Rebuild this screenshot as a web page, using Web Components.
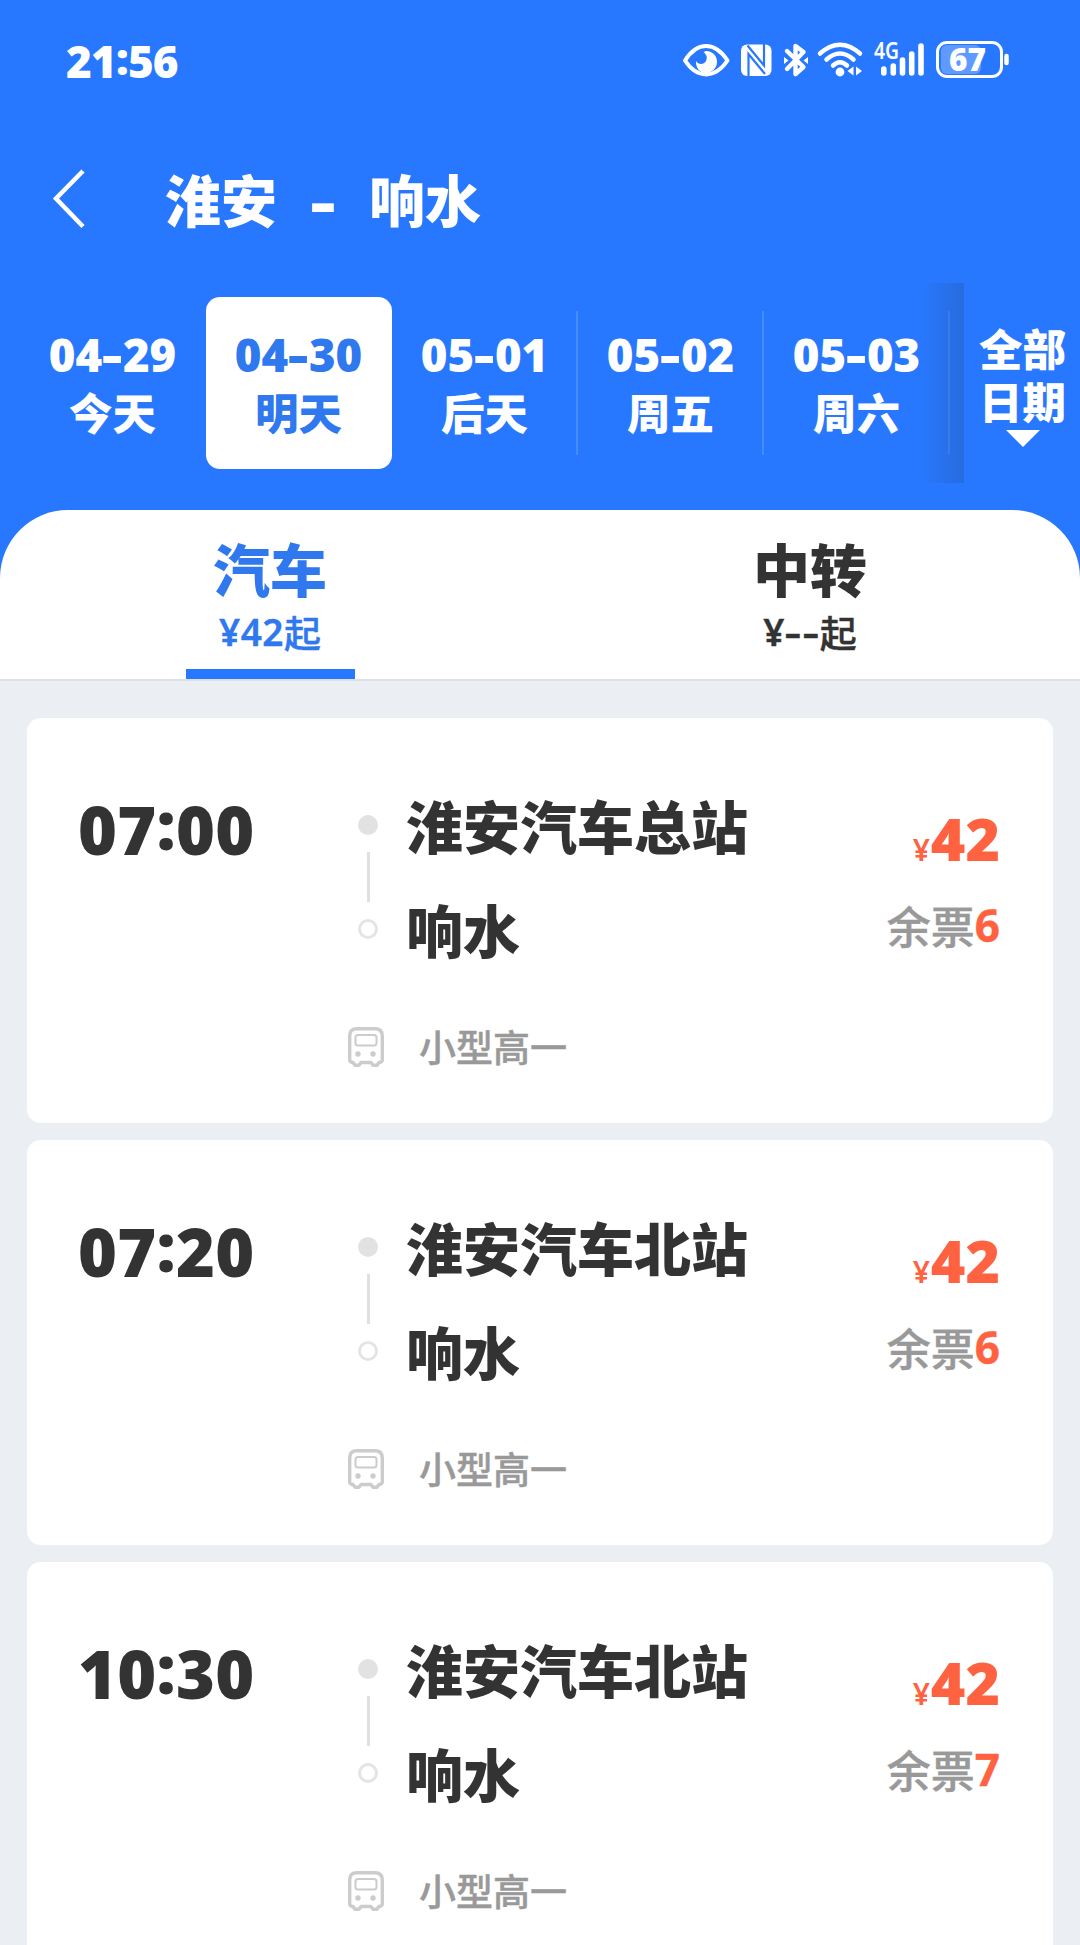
<!DOCTYPE html>
<html lang="zh-CN">
<head>
<meta charset="utf-8">
<title>淮安 - 响水</title>
<style>
  body {
    margin: 0;
    width: 1080px;
    height: 1945px;
    overflow: hidden;
    background: #ebeff4;
    color: #333;
    --num: "Noto Sans", sans-serif;
    font-family: "Noto Sans CJK SC", sans-serif;
    font-weight: 900;
  }
  header {
    height: 510px;
    background: #2878ff;
    color: #fff;
  }
</style>
</head>
<body>
<header>
  <status-bar time="21:56" battery="67"></status-bar>
  <nav-bar><span slot="from">淮安</span><span slot="to">响水</span></nav-bar>
  <date-strip>
    <date-item date="04-29">今天</date-item>
    <date-item date="04-30" active>明天</date-item>
    <date-item date="05-01" line>后天</date-item>
    <date-item date="05-02" line>周五</date-item>
    <date-item date="05-03" line>周六</date-item>
  </date-strip>
</header>
<trip-tabs>
  <trip-tab active price="42">汽车</trip-tab>
  <trip-tab price="--">中转</trip-tab>
</trip-tabs>
<trip-list></trip-list>

<script>
// wraps ":" and "-" so they can be raised or widened next to the digits
const marks = (text) => String(text)
  .replace(/-/g, '<i class="dash">-</i>')
  .replace(/:/g, '<i class="colon">:</i>');

const markStyles = `
  i { font-style: normal; }
  .colon { vertical-align: .07em; line-height: 0; }
  .dash { display: inline-block; transform: scaleX(1.4); margin: 0 .07em; }
`;

class StatusBar extends HTMLElement {
  constructor() {
    super();
    this.attachShadow({ mode: 'open' });
  }

  connectedCallback() {
    this.shadowRoot.innerHTML = `
      <style>
        ${markStyles}
        :host {
          display: flex;
          justify-content: space-between;
          box-sizing: border-box;
          height: 120px;
          padding: 31px 70px 0 66px;
        }
        .time {
          font: 900 44px/60px var(--num);
          letter-spacing: -.8px;
        }
        svg { display: block; margin-top: -1px; }
        text { font-family: var(--num); font-weight: 900; }
        .net { font-weight: 600; }
      </style>
      <div class="time">${marks(this.getAttribute('time'))}</div>
      <svg width="330" height="60" viewBox="680 30 330 60" fill="none" stroke="#fff" stroke-linecap="round" stroke-linejoin="round">
        <path d="M685 60.500C697 41 715 41 727.500 60.500C715 79 697 79 685 60.500Z" stroke-width="4"/>
        <path d="M706 51C712 51 717 55 717 62C717 68 712 73 706 73C700 73 695.500 68 696 61C698 65 704 65 706 61C708 57 706 54 703.500 52Z" fill="#fff" stroke="none"/>
        <rect x="741" y="44.500" width="30.500" height="31.500" rx="6" fill="#fff" stroke="none"/>
        <path d="M748.500 76V54L765 74M764 44V65.500L747.500 45.500" stroke="#2878ff" stroke-width="2.200" stroke-linecap="butt" stroke-linejoin="miter"/>
        <path d="M787 51L803.500 67L795.500 74V46L803.500 52L787 69" stroke-width="4.400"/>
        <path d="M784 57V64L788.500 60.500ZM808 57V64L803.500 60.500Z" fill="#fff" stroke="none"/>
        <path d="M820 53.500Q840 36 860 53.500M826.500 59.500Q840 47.500 853.500 59.500M833 65.500Q840 59 847 65.500" stroke-width="4.500"/>
        <circle cx="840" cy="72" r="4.400" fill="#fff" stroke="none"/>
        <path d="M853.500 66.500V75.500L847.500 71ZM856 66.500V75.500L862 71Z" fill="#fff" stroke="none"/>
        <text class="net" x="874" y="59" font-size="22.500" textLength="25" lengthAdjust="spacingAndGlyphs" fill="#fff" stroke="none">4G</text>
        <path d="M883.800 69V73M893.300 66V73M902.500 60V73M911.700 54V73M921 46V73" stroke-width="5.600"/>
        <rect x="941" y="45" width="40" height="29" rx="6" fill="#fff" fill-opacity=".25" stroke="none"/>
        <rect x="937.500" y="42.500" width="64" height="34" rx="9.500" stroke-width="3"/>
        <path d="M1006.500 56V63" stroke-width="4.500"/>
        <text x="949" y="70.500" font-size="31" textLength="37" lengthAdjust="spacingAndGlyphs" fill="#fff" stroke="none">${this.getAttribute('battery')}</text>
      </svg>
    `;
  }
}

class NavBar extends HTMLElement {
  constructor() {
    super();
    this.attachShadow({ mode: 'open' }).innerHTML = `
      <style>
        :host {
          display: flex;
          align-items: center;
          box-sizing: border-box;
          height: 157px;
          padding-left: 50px;
          font-size: 56px;
          line-height: 80px;
        }
        svg { width: 38px; height: 64px; margin-right: 77px; }
        .title { display: flex; align-items: center; padding-bottom: 2px; }
        .dash {
          width: 22px;
          margin: 6px 35px 0;
          font: 900 56px/80px var(--num);
          text-align: center;
          transform: scaleX(1.4);
        }
      </style>
      <svg viewBox="0 0 38 64" fill="none" stroke="#fff" stroke-width="4.500">
        <path d="M33 4L6 31.500L33 59.500"/>
      </svg>
      <div class="title">
        <slot name="from"></slot>
        <span class="dash">-</span>
        <slot name="to"></slot>
      </div>
    `;
  }
}

class DateItem extends HTMLElement {
  constructor() {
    super();
    this.attachShadow({ mode: 'open' });
  }

  connectedCallback() {
    this.shadowRoot.innerHTML = `
      <style>
        ${markStyles}
        :host {
          display: block;
          box-sizing: border-box;
          width: 186px;
          height: 172px;
          padding-top: 28px;
          text-align: center;
        }
        :host([active]) {
          background: #fff;
          color: #2f78ee;
          border-radius: 14px;
        }
        :host([line]) {
          background: linear-gradient(rgba(255, 255, 255, .14), rgba(255, 255, 255, .14)) right 14px / 2px 144px no-repeat;
        }
        .date {
          font: 900 45.500px/58px var(--num);
          margin-left: -1px;
        }
        .day {
          font-size: 43.500px;
          line-height: 58px;
          margin-left: -1px;
        }
      </style>
      <div class="date">${marks(this.getAttribute('date'))}</div>
      <div class="day"><slot></slot></div>
    `;
  }
}

class DateStrip extends HTMLElement {
  constructor() {
    super();
    this.attachShadow({ mode: 'open' }).innerHTML = `
      <style>
        :host { display: flex; height: 200px; padding-top: 6px; }
        .days {
          position: relative;
          display: flex;
          align-items: center;
          box-sizing: border-box;
          width: 964px;
          padding-left: 20px;
        }
        .days::after {
          content: "";
          position: absolute;
          top: 0;
          right: 0;
          width: 44px;
          height: 200px;
          background: linear-gradient(90deg, rgba(38, 96, 190, 0), rgba(38, 100, 200, .6));
        }
        .all {
          display: flex;
          flex-direction: column;
          align-items: center;
          flex: 1;
          padding: 39px 0 0 1px;
          font-size: 43.500px;
          line-height: 52.500px;
        }
        .arrow {
          margin-top: 3px;
          border: 17px solid transparent;
          border-top-color: #fff;
          border-bottom: 0;
        }
      </style>
      <div class="days"><slot></slot></div>
      <div class="all"><span>全部</span><span>日期</span><span class="arrow"></span></div>
    `;
  }
}

class TripTabs extends HTMLElement {
  constructor() {
    super();
    this.attachShadow({ mode: 'open' }).innerHTML = `
      <style>
        :host { display: block; background: #2878ff; }
        .tabs {
          display: grid;
          grid-template-columns: 1fr 1fr;
          height: 169px;
          background: #fff;
          border-bottom: 2px solid #dde1e6;
          border-radius: 68px 68px 0 0;
        }
      </style>
      <div class="tabs"><slot></slot></div>
    `;
  }
}

class TripTab extends HTMLElement {
  constructor() {
    super();
    this.attachShadow({ mode: 'open' });
  }

  connectedCallback() {
    this.shadowRoot.innerHTML = `
      <style>
        ${markStyles}
        :host {
          display: flex;
          flex-direction: column;
          align-items: center;
          padding-top: 20px;
        }
        :host([active]) { color: #2f78ee; }
        .name { font-size: 57px; line-height: 74px; }
        .price {
          display: flex;
          font-size: 37px;
          line-height: 48px;
          font-weight: 500;
          padding-top: 4px;
          -webkit-text-stroke: .4px;
        }
        .num { font-weight: 600; font-family: var(--num); letter-spacing: .5px; }
        .bar { width: 169px; height: 10px; margin-top: auto; }
        :host([active]) .bar { background: #2878ff; }
      </style>
      <div class="name"><slot></slot></div>
      <div class="price"><span class="num">¥${marks(this.getAttribute('price'))}</span><span>起</span></div>
      <div class="bar"></div>
    `;
  }
}

class TripCard extends HTMLElement {
  constructor() {
    super();
    this.attachShadow({ mode: 'open' });
  }

  set trip(trip) {
    this._trip = trip;
    this.render();
  }

  render() {
    this.shadowRoot.innerHTML = `
      <style>
        ${markStyles}
        :host {
          display: grid;
          grid-template-columns: 268px 1fr auto;
          box-sizing: border-box;
          height: 405px;
          padding: 72px 53px 0 51px;
          background: #fff;
          border-radius: 14px;
        }
        .time {
          font: 900 66.500px/80px var(--num);
          letter-spacing: .3px;
          margin-top: -1px;
        }
        .stops {
          display: grid;
          grid-template-columns: 60px 1fr;
          grid-template-rows: 208px auto;
          align-content: start;
          font-size: 57px;
          line-height: 68px;
        }
        .track {
          display: flex;
          flex-direction: column;
          align-items: center;
          width: 20px;
          padding-top: 25px;
          margin-left: 12px;
        }
        .dot {
          box-sizing: border-box;
          width: 20px;
          height: 20px;
          border-radius: 50%;
          background: #e2e2e2;
        }
        .rail { width: 3px; height: 50px; margin: 17px 0; background: #e0e0e0; }
        .dot.end { background: none; border: 3px solid #e4e4e4; }
        .stop { height: 104px; }
        .type {
          grid-column: 1 / 3;
          display: flex;
          align-items: center;
          gap: 35px;
          margin-top: 22px;
          height: 54px;
          padding-left: 2px;
          color: #999;
          font-size: 37px;
          line-height: 54px;
          font-weight: 500;
        }
        .type span { margin-top: -3px; -webkit-text-stroke: .4px; }
        .side { text-align: right; }
        .price {
          color: #ff6240;
          font: 900 59px/80px var(--num);
          padding-top: 8px;
        }
        .price small { font-size: 30px; font-weight: 600; margin-right: 1px; }
        .left {
          display: flex;
          justify-content: flex-end;
          margin-top: 5px;
          color: #999;
          font-size: 44px;
          line-height: 60px;
          font-weight: 500;
          -webkit-text-stroke: .4px;
        }
        .left b {
          color: #ff6240;
          font: 700 44px/60px var(--num);
        }
      </style>
      <div class="time">${marks(this._trip.time)}</div>
      <div class="stops">
        <div class="track">
          <span class="dot"></span><span class="rail"></span><span class="dot end"></span>
        </div>
        <div>
          <div class="stop">${this._trip.from}</div>
          <div class="stop">${this._trip.to}</div>
        </div>
        <div class="type">
          <svg width="36" height="40" viewBox="0 0 36 40" fill="none" stroke="#ccc" stroke-width="3.400" stroke-linejoin="round">
            <path d="M9 1.700H27Q34.300 1.700 34.300 9V33Q34.300 35 31 35.500L29 38.300H25L23 35.500H13L11 38.300H7L5 35.500Q1.700 35 1.700 33V9Q1.700 1.700 9 1.700Z"/>
            <rect x="7.500" y="8" width="21" height="10.500" rx="2.500" stroke-width="2"/>
            <circle cx="10" cy="27" r="2.700" fill="#ccc" stroke="none"/>
            <circle cx="25" cy="27" r="2.700" fill="#ccc" stroke="none"/>
          </svg>
          <span>${this._trip.type}</span>
        </div>
      </div>
      <div class="side">
        <div class="price"><small>¥</small>${this._trip.price}</div>
        <div class="left">余票<b>${this._trip.left}</b></div>
      </div>
    `;
  }
}

class TripList extends HTMLElement {
  constructor() {
    super();
    this.attachShadow({ mode: 'open' }).innerHTML = `
      <style>
        :host {
          display: flex;
          flex-direction: column;
          gap: 17px;
          padding: 37px 27px 0;
        }
      </style>
    `;
  }

  connectedCallback() {
    const trips = [
      { time: '07:00', from: '淮安汽车总站', to: '响水', type: '小型高一', price: 42, left: 6 },
      { time: '07:20', from: '淮安汽车北站', to: '响水', type: '小型高一', price: 42, left: 6 },
      { time: '10:30', from: '淮安汽车北站', to: '响水', type: '小型高一', price: 42, left: 7 },
    ];
    trips.forEach((trip) => {
      const card = document.createElement('trip-card');
      card.trip = trip;
      this.shadowRoot.appendChild(card);
    });
  }
}

customElements.define('status-bar', StatusBar);
customElements.define('nav-bar', NavBar);
customElements.define('date-item', DateItem);
customElements.define('date-strip', DateStrip);
customElements.define('trip-tab', TripTab);
customElements.define('trip-tabs', TripTabs);
customElements.define('trip-card', TripCard);
customElements.define('trip-list', TripList);
</script>
</body>
</html>
